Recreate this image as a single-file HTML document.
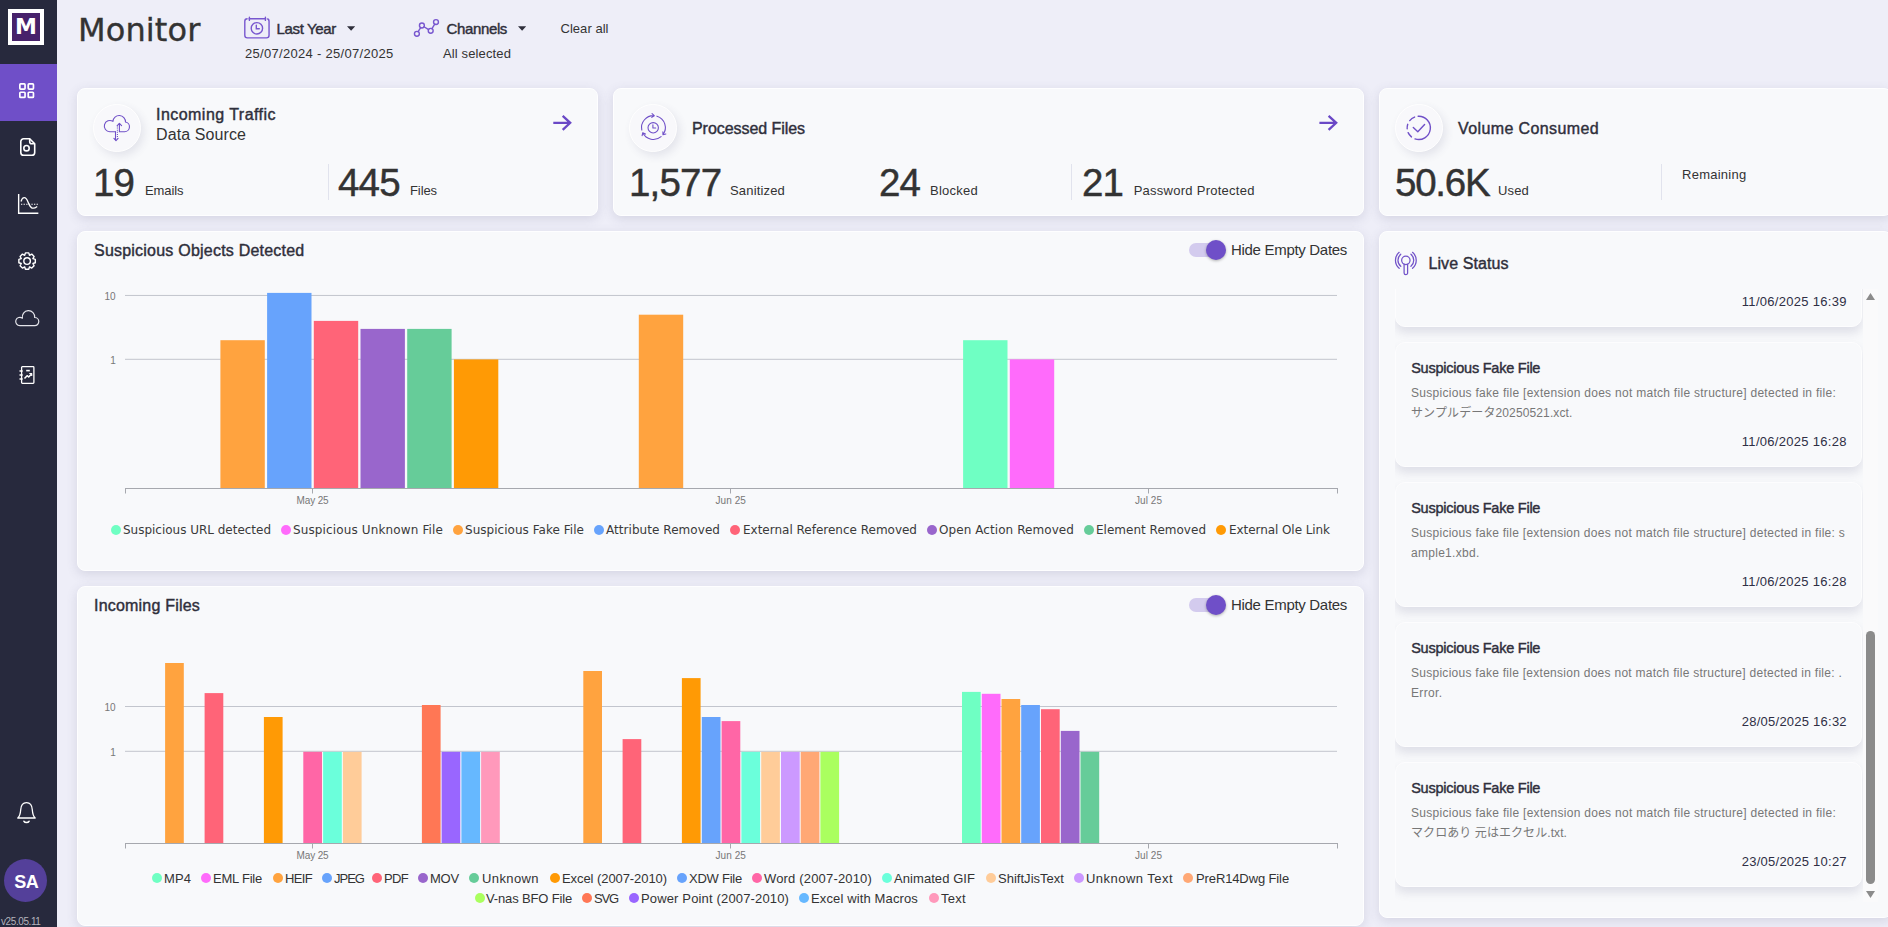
<!DOCTYPE html>
<html lang="en">
<head>
<meta charset="utf-8">
<title>Monitor</title>
<style>
*{box-sizing:border-box;margin:0;padding:0}
html,body{width:1888px;height:927px;overflow:hidden}
body{background:#eeeef8;font-family:"Liberation Sans","Noto Sans CJK JP",sans-serif;position:relative;color:#333}
.t{position:absolute;white-space:nowrap;display:block}
.dj{font-family:"DejaVu Sans","Noto Sans CJK JP",sans-serif}
.abs{position:absolute}
.side{position:absolute;left:0;top:0;width:57px;height:927px;background:#27293d}
.side .act{position:absolute;left:0;top:64px;width:57px;height:57px;background:#6f4fc8}
.logo{position:absolute;left:8px;top:9px;width:36px;height:36px;background:#fff}
.logo i{position:absolute;left:4px;top:4px;width:28px;height:28px;background:#47216b;display:block}
.card{position:absolute;background:#f8f9fb;border-radius:8px;border:1px solid #fefeff;box-shadow:0 3px 11px rgba(80,80,120,.16)}
.ic{position:absolute;width:47.600px;height:47.600px;border-radius:50%;background:#f8f8fb;border:1.500px solid #fff;box-shadow:3px 4px 9px rgba(60,60,110,.11)}
.vd{position:absolute;width:1px;background:#e1e3ed}
.d{position:absolute;display:block;width:10.2px;height:10.2px;border-radius:50%}
.tg{position:absolute;width:34px;height:14px;border-radius:7px;background:#d3cbee}
.kn{position:absolute;width:20.3px;height:20.3px;border-radius:50%;background:#6f4fc8;box-shadow:0 1px 3px rgba(0,0,0,.3)}
.lc{position:absolute;width:467.3px;height:124.5px;background:#f8f9fb;border-radius:10px;border:1px solid #fdfdfe;box-shadow:0 6px 10px rgba(70,70,110,.135)}
svg{position:absolute;overflow:visible}
</style>
</head>
<body>

<!-- sidebar -->
<div class="side">
  <div class="logo"><i></i></div>
  <div class="act"></div>
  <!-- grid icon -->
  <svg style="left:19.4px;top:82.5px" width="15.3" height="15.3" viewBox="0 0 15.3 15.3" fill="none" stroke="#fff" stroke-width="1.7">
    <rect x="0.85" y="0.85" width="5.2" height="5.2" rx="0.8"/><rect x="9.25" y="0.85" width="5.2" height="5.2" rx="0.8"/>
    <rect x="0.85" y="9.25" width="5.2" height="5.2" rx="0.8"/><rect x="9.25" y="9.25" width="5.2" height="5.2" rx="0.8"/>
  </svg>
  <!-- file icon -->
  <svg style="left:19.9px;top:137.8px" width="15.5" height="18" viewBox="0 0 15.5 18" fill="none" stroke="#fff" stroke-width="1.6" stroke-linejoin="round">
    <path d="M3.6 0.8h6.1l5 5v8.600a2.800 2.800 0 0 1-2.800 2.800H3.600a2.800 2.800 0 0 1-2.800-2.800V3.600a2.800 2.800 0 0 1 2.800-2.800z"/><path d="M9.700 0.800v3a2 2 0 0 0 2 2h3"/><circle cx="6.500" cy="10.200" r="2.700"/>
  </svg>
  <!-- chart icon -->
  <svg style="left:17.500px;top:194.400px" width="20.500" height="20" viewBox="0 0 20.500 20" fill="none" stroke="#fff" stroke-width="1.300">
    <path d="M0.650 0v19.300h19.700" stroke-width="1.400"/><path d="M3 7.500c1.500-5 4.800-5.500 7 0.500s4.500 8 9.200 4.500"/><path d="M3 10.200h17" stroke-dasharray="1.300 1.300" stroke-width="1.100"/>
  </svg>
  <!-- gear icon -->
  <svg style="left:17.900px;top:252px" width="18.200" height="18.200" viewBox="-9.100 -9.100 18.200 18.200" fill="none" stroke="#fff" stroke-width="1.400" stroke-linejoin="round">
    <circle cx="0" cy="0" r="3.300"/>
    <path d="M-2.40 -5.83L-1.67 -8.23L1.67 -8.23L2.40 -5.83L2.43 -5.81L4.64 -7.00L7.00 -4.64L5.81 -2.43L5.83 -2.40L8.23 -1.67L8.23 1.67L5.83 2.40L5.81 2.43L7.00 4.64L4.64 7.00L2.43 5.81L2.40 5.83L1.67 8.23L-1.67 8.23L-2.40 5.83L-2.43 5.81L-4.64 7.00L-7.00 4.64L-5.81 2.43L-5.83 2.40L-8.23 1.67L-8.23 -1.67L-5.83 -2.40L-5.81 -2.43L-7.00 -4.64L-4.64 -7.00L-2.43 -5.81z"/>
  </svg>
  <!-- cloud icon -->
  <svg style="left:14.800px;top:309.700px" width="24.400" height="16.400" viewBox="0 0 24.400 16.400" fill="none" stroke="#e4e4ea" stroke-width="1.200" stroke-linejoin="round">
    <path d="M4.9 15.7H19.7A4.1 4.1 0 0 0 19.66 7.5A6.2 6.2 0 1 0 7.45 8.17A4.2 4.2 0 1 0 4.9 15.7z"/>
  </svg>
  <!-- report icon -->
  <svg style="left:19.400px;top:366px" width="15.600" height="18" viewBox="0 0 15.600 18" fill="none" stroke="#fff" stroke-width="1.300" stroke-linejoin="round">
    <rect x="2.600" y="0.650" width="12.300" height="16.700" rx="0.800"/><path d="M0.500 5h3.200M0.500 9h3.200M0.500 13h3.200" stroke-width="1.500"/><path d="M5.500 12.500l2.600-2.800 1.600 1.300 2.800-3" stroke-width="1.500"/><path d="M10.300 7.500h2.400v2.400" stroke-width="1.200"/><path d="M7.200 4.600h3.600" stroke-width="1.600"/>
  </svg>
  <!-- bell -->
  <svg style="left:17px;top:802px" width="19" height="21.500" viewBox="0 0 19 21.500" fill="none" stroke="#fff" stroke-width="1.300" stroke-linejoin="round" stroke-linecap="round">
    <path d="M0.800 16h17.400c-1.900-1.700-2.600-3.500-2.900-8.200C15 3.300 12.500 0.700 9.500 0.700S4 3.300 3.700 7.800C3.400 12.500 2.700 14.300 0.800 16z"/><path d="M7 19.300c.9 1.500 4.100 1.500 5 0" stroke-width="1.600"/>
  </svg>
  <div class="abs" style="left:3.900px;top:858.800px;width:43.400px;height:43.400px;border-radius:50%;background:#54409a"></div>
</div>

<!-- header icons -->
<svg style="left:240px;top:10px" width="300" height="34" viewBox="240 10 300 34" fill="none" stroke="#7857cf" stroke-width="1.400" stroke-linecap="round">
  <rect x="244.800" y="18.700" width="24.250" height="19.200" rx="2.600"/>
  <path d="M247.600 18.700h1M266.200 18.700h1" stroke="#eeeef8" stroke-width="2.400" stroke-linecap="butt"/>
  <path d="M249.400 17.200V20.400M265.400 17.200V20.400"/>
  <circle cx="256.900" cy="28.300" r="5.700"/>
  <path d="M256.300 25.200V28.700H259.300"/>
  <circle cx="416.9" cy="33.8" r="2.45"/><circle cx="421.9" cy="25.5" r="2.45"/><circle cx="430.7" cy="30.8" r="2.45"/><circle cx="436" cy="22.1" r="2.45"/>
  <path d="M418.16 31.70L420.64 27.60M424.00 26.76L428.60 29.54M431.97 28.71L434.73 24.19"/>
  <path d="M347 26.300h8.200l-4.100 4.500zM518 26.300h8.200l-4.100 4.500z" fill="#2f2f3b" stroke="none"/>
</svg>

<!-- stat cards -->
<div class="card" style="left:77px;top:88px;width:521px;height:128px"></div>
<div class="card" style="left:613px;top:88px;width:751px;height:128px"></div>
<div class="card" style="left:1379px;top:88px;width:513px;height:128px"></div>
<div class="ic" style="left:93.300px;top:104px"></div>
<div class="ic" style="left:629.300px;top:104px"></div>
<div class="ic" style="left:1395.300px;top:104px"></div>
<div class="vd" style="left:328px;top:164px;height:36px"></div>
<div class="vd" style="left:1071px;top:164px;height:36px"></div>
<div class="vd" style="left:1661px;top:164px;height:36px"></div>


<!-- arrows -->
<svg style="left:540px;top:110px" width="810" height="26" viewBox="540 110 810 26" fill="none" stroke="#6a48c6" stroke-width="2.300" stroke-linejoin="miter">
  <path d="M1319.400 122.800H1336M1328.600 115.900L1336.200 122.800L1328.600 129.900"/>
  <path d="M553.300 122.800H570M562.700 115.900L570.200 122.800L562.700 129.900"/>
</svg>



<!-- stat icons -->
<svg style="left:0;top:100px" width="1888" height="60" viewBox="0 100 1888 60" fill="none" stroke="#7050c8" stroke-width="1.1" stroke-linecap="round" stroke-linejoin="round">
  <path d="M115.500 131.700H109.900A5.600 5.600 0 1 1 112.910 121.380A6.300 6.300 0 0 1 125.490 122.080A4.850 4.850 0 0 1 124.600 131.700H119.400V123.500"/>
  <path d="M117.2 125.600L119.400 123.300L121.600 125.600"/>
  <path d="M115.500 131.700V140.200M113.900 138.300L116 140.600L118.100 138.300"/>
  <path d="M117.400 125.500V138.500" stroke-dasharray="1 1.100" stroke-linecap="butt"/>
  <path d="M641.81 130.02A11.9 11.9 0 0 1 654.28 115.68 M652.05 113.67L654.28 115.68L651.79 117.36 M656.93 116.17A11.9 11.9 0 0 1 662.95 134.71 M665.85 133.94L662.95 134.71L662.90 131.71 M661.10 136.67A11.9 11.9 0 0 1 642.75 132.77 M642.13 135.70L642.75 132.77L645.45 134.08"/>
  <circle cx="653.2" cy="127.800" r="5.200"/>
  <path d="M652.900 124.700V128H655.700"/>
  <g stroke-width="1.400">
  <path d="M1418.14 116.32A11.6 11.6 0 1 1 1414.97 138.87"/>
  <path d="M1411.45 136.91A11.6 11.6 0 0 1 1408.15 132.62 M1407.18 128.71A11.6 11.6 0 0 1 1407.72 124.32 M1409.74 120.60A11.6 11.6 0 0 1 1414.59 117.07"/>
  <path d="M1413.300 127.400L1417.800 131.700L1424.600 124.400"/>
  </g>
</svg>

<!-- chart cards -->
<div class="card" style="left:77px;top:231px;width:1287px;height:340px"></div>
<div class="card" style="left:77px;top:586px;width:1287px;height:340px"></div>
<div class="card" style="left:1379px;top:231px;width:513px;height:687px"></div>

<!-- toggles -->
<div class="tg" style="left:1189px;top:243px"></div><div class="kn" style="left:1206px;top:239.8px"></div>
<div class="tg" style="left:1189px;top:598px"></div><div class="kn" style="left:1206px;top:594.8px"></div>

<!-- charts -->
<svg style="left:0;top:0" width="1370" height="927" viewBox="0 0 1370 927" shape-rendering="auto">
<path d="M125 295.45H1337" stroke="#c2c5cd" stroke-width="1"/>
<path d="M125 359.3H1337" stroke="#c2c5cd" stroke-width="1"/>
<path d="M125 706.5H1337" stroke="#c2c5cd" stroke-width="1"/>
<path d="M125 751.3H1337" stroke="#c2c5cd" stroke-width="1"/>
<rect x="220.4" y="340.2" width="44.4" height="148.3" fill="#ffa33f"/>
<rect x="267.1" y="292.9" width="44.4" height="195.6" fill="#67a3fc"/>
<rect x="313.8" y="320.9" width="44.4" height="167.6" fill="#ff6478"/>
<rect x="360.5" y="328.9" width="44.4" height="159.6" fill="#9966cc"/>
<rect x="407.2" y="328.9" width="44.4" height="159.6" fill="#66cc99"/>
<rect x="453.9" y="359.4" width="44.4" height="129.1" fill="#ff9a05"/>
<rect x="638.8" y="314.7" width="44.4" height="173.8" fill="#ffa33f"/>
<rect x="963.1" y="340.2" width="44.4" height="148.3" fill="#6fffc3"/>
<rect x="1009.8" y="359.4" width="44.4" height="129.1" fill="#ff6bfb"/>
<rect x="165.1" y="663.0" width="18.7" height="180.5" fill="#ffa33f"/>
<rect x="204.6" y="693.1" width="18.7" height="150.4" fill="#ff6478"/>
<rect x="263.9" y="717.0" width="18.7" height="126.5" fill="#ff9a05"/>
<rect x="303.3" y="751.8" width="18.7" height="91.7" fill="#ff66a6"/>
<rect x="323.1" y="751.8" width="18.7" height="91.7" fill="#6bffdb"/>
<rect x="342.9" y="751.8" width="18.7" height="91.7" fill="#ffcc99"/>
<rect x="421.9" y="705.0" width="18.7" height="138.5" fill="#ff7755"/>
<rect x="441.6" y="751.8" width="18.7" height="91.7" fill="#9966ff"/>
<rect x="461.4" y="751.8" width="18.7" height="91.7" fill="#66b8ff"/>
<rect x="481.1" y="751.8" width="18.7" height="91.7" fill="#ff99bb"/>
<rect x="583.3" y="671.0" width="18.7" height="172.5" fill="#ffa33f"/>
<rect x="622.6" y="739.1" width="18.7" height="104.4" fill="#ff6478"/>
<rect x="681.9" y="678.1" width="18.7" height="165.4" fill="#ff9a05"/>
<rect x="701.8" y="717.0" width="18.7" height="126.5" fill="#67a3fc"/>
<rect x="721.6" y="721.1" width="18.7" height="122.4" fill="#ff66a6"/>
<rect x="741.4" y="751.8" width="18.7" height="91.7" fill="#6bffdb"/>
<rect x="761.2" y="751.8" width="18.7" height="91.7" fill="#ffcc99"/>
<rect x="781.0" y="751.8" width="18.7" height="91.7" fill="#cc99ff"/>
<rect x="800.7" y="751.8" width="18.7" height="91.7" fill="#ffa875"/>
<rect x="820.4" y="751.8" width="18.7" height="91.7" fill="#aaff5f"/>
<rect x="962.0" y="691.9" width="18.7" height="151.6" fill="#6fffc3"/>
<rect x="981.8" y="693.8" width="18.7" height="149.7" fill="#ff6bfb"/>
<rect x="1001.5" y="699.0" width="18.7" height="144.5" fill="#ffa33f"/>
<rect x="1021.2" y="705.0" width="18.7" height="138.5" fill="#67a3fc"/>
<rect x="1041.0" y="709.2" width="18.7" height="134.3" fill="#ff6478"/>
<rect x="1060.8" y="730.9" width="18.7" height="112.6" fill="#9966cc"/>
<rect x="1080.5" y="751.8" width="18.7" height="91.7" fill="#66cc99"/>
<path d="M125 488.5H1338" stroke="#a6a8ae" stroke-width="1"/>
<path d="M125.5 488.5v5" stroke="#a6a8ae" stroke-width="1"/>
<path d="M312.5 488.5v5" stroke="#a6a8ae" stroke-width="1"/>
<path d="M730.5 488.5v5" stroke="#a6a8ae" stroke-width="1"/>
<path d="M1148.5 488.5v5" stroke="#a6a8ae" stroke-width="1"/>
<path d="M1337.5 488.5v5" stroke="#a6a8ae" stroke-width="1"/>
<path d="M125 843.5H1338" stroke="#a6a8ae" stroke-width="1"/>
<path d="M125.5 843.5v5" stroke="#a6a8ae" stroke-width="1"/>
<path d="M312.5 843.5v5" stroke="#a6a8ae" stroke-width="1"/>
<path d="M730.5 843.5v5" stroke="#a6a8ae" stroke-width="1"/>
<path d="M1148.5 843.5v5" stroke="#a6a8ae" stroke-width="1"/>
<path d="M1337.5 843.5v5" stroke="#a6a8ae" stroke-width="1"/>
</svg>
<i class="d" style="left:110.7px;top:524.5px;background:#6fffc3"></i>
<i class="d" style="left:280.7px;top:524.5px;background:#ff6bfb"></i>
<i class="d" style="left:452.7px;top:524.5px;background:#ffa33f"></i>
<i class="d" style="left:593.7px;top:524.5px;background:#67a3fc"></i>
<i class="d" style="left:729.7px;top:524.5px;background:#ff6478"></i>
<i class="d" style="left:926.7px;top:524.5px;background:#9966cc"></i>
<i class="d" style="left:1083.7px;top:524.5px;background:#66cc99"></i>
<i class="d" style="left:1215.7px;top:524.5px;background:#ff9a05"></i>
<i class="d" style="left:151.7px;top:872.9px;background:#6fffc3"></i>
<i class="d" style="left:200.7px;top:872.9px;background:#ff6bfb"></i>
<i class="d" style="left:272.7px;top:872.9px;background:#ffa33f"></i>
<i class="d" style="left:321.7px;top:872.9px;background:#67a3fc"></i>
<i class="d" style="left:371.7px;top:872.9px;background:#ff6478"></i>
<i class="d" style="left:417.7px;top:872.9px;background:#9966cc"></i>
<i class="d" style="left:468.7px;top:872.9px;background:#66cc99"></i>
<i class="d" style="left:549.7px;top:872.9px;background:#ff9a05"></i>
<i class="d" style="left:676.7px;top:872.9px;background:#67a3fc"></i>
<i class="d" style="left:751.7px;top:872.9px;background:#ff66a6"></i>
<i class="d" style="left:881.7px;top:872.9px;background:#6bffdb"></i>
<i class="d" style="left:985.7px;top:872.9px;background:#ffcc99"></i>
<i class="d" style="left:1073.7px;top:872.9px;background:#cc99ff"></i>
<i class="d" style="left:1182.7px;top:872.9px;background:#ffa875"></i>
<i class="d" style="left:474.7px;top:892.9px;background:#aaff5f"></i>
<i class="d" style="left:581.7px;top:892.9px;background:#ff7755"></i>
<i class="d" style="left:628.7px;top:892.9px;background:#9966ff"></i>
<i class="d" style="left:798.7px;top:892.9px;background:#66b8ff"></i>
<i class="d" style="left:928.7px;top:892.9px;background:#ff99bb"></i>

<!-- live status -->
<svg style="left:1394.9px;top:251.3px" width="22" height="24" viewBox="0 0 22 24" fill="none" stroke="#7253c9" stroke-width="1.25" stroke-linecap="round">
  <circle cx="10.85" cy="9.3" r="4.2"/>
  <path d="M9.1 13.3v8.6a1.75 1.75 0 0 0 3.5 0v-8.6"/>
  <path d="M5.77 3.25a7.9 7.9 0 0 0 0 12.10M15.93 3.25a7.9 7.9 0 0 1 0 12.10"/>
  <path d="M4.17 1.33a10.4 10.4 0 0 0 0 15.93M17.53 1.33a10.4 10.4 0 0 1 0 15.93"/>
</svg>
<div class="abs" style="left:1395px;top:289px;width:484px;height:613px;overflow:hidden">
  <div class="lc" style="left:0;top:-87px"></div>
  <div class="lc" style="left:0;top:53px"></div>
  <div class="lc" style="left:0;top:193px"></div>
  <div class="lc" style="left:0;top:333px"></div>
  <div class="lc" style="left:0;top:473px"></div>
  <div class="abs" style="left:468px;top:0;width:15px;height:613px;background:#fafafb"></div>
  <div class="abs" style="left:471px;top:342px;width:9px;height:253px;border-radius:4.5px;background:#8b8b8b"></div>
  <svg style="left:471px;top:4px" width="9" height="7" viewBox="0 0 9 7"><path d="M0 7h9L4.500 0z" fill="#8b8b8b"/></svg>
  <svg style="left:471px;top:602px" width="9" height="7" viewBox="0 0 9 7"><path d="M0 0h9L4.500 7z" fill="#8b8b8b"/></svg>
</div>

<span class="t dj" style="left:78px;top:13.91px;font-size:32px;line-height:32px;color:#333;letter-spacing:0.123px;-webkit-text-stroke:0.35px;">Monitor</span>
<span class="t" style="left:276.5px;top:21.30px;font-size:15px;line-height:15px;color:#2f2f3b;-webkit-text-stroke:0.42px;letter-spacing:-0.340px;">Last Year</span>
<span class="t" style="left:245px;top:47.00px;font-size:13px;line-height:13px;color:#333;letter-spacing:0.296px;">25/07/2024 - 25/07/2025</span>
<span class="t" style="left:446.5px;top:21.30px;font-size:15px;line-height:15px;color:#2f2f3b;-webkit-text-stroke:0.42px;letter-spacing:-0.361px;">Channels</span>
<span class="t" style="left:443px;top:47.00px;font-size:13px;line-height:13px;color:#333;letter-spacing:0.126px;">All selected</span>
<span class="t" style="left:560.5px;top:21.50px;font-size:13px;line-height:13px;color:#333;letter-spacing:0.035px;">Clear all</span>
<span class="t" style="left:156px;top:106.96px;font-size:16px;line-height:16px;color:#2f2f3b;-webkit-text-stroke:0.42px;letter-spacing:0.460px;">Incoming Traffic</span>
<span class="t" style="left:156px;top:126.96px;font-size:16px;line-height:16px;color:#333;letter-spacing:0.097px;">Data Source</span>
<span class="t" style="left:93px;top:163.91px;font-size:38.5px;line-height:38.5px;color:#333333;letter-spacing:-0.8px;-webkit-text-stroke:0.45px;">19</span>
<span class="t" style="left:145px;top:184.00px;font-size:13px;line-height:13px;color:#333;letter-spacing:-0.086px;">Emails</span>
<span class="t" style="left:338px;top:163.91px;font-size:38.5px;line-height:38.5px;color:#333333;letter-spacing:-0.8px;-webkit-text-stroke:0.45px;">445</span>
<span class="t" style="left:410px;top:184.00px;font-size:13px;line-height:13px;color:#333;letter-spacing:-0.091px;">Files</span>
<span class="t" style="left:692px;top:121.46px;font-size:16px;line-height:16px;color:#2f2f3b;-webkit-text-stroke:0.42px;letter-spacing:-0.055px;">Processed Files</span>
<span class="t" style="left:629px;top:163.91px;font-size:38.5px;line-height:38.5px;color:#333333;letter-spacing:-0.8px;-webkit-text-stroke:0.45px;">1,577</span>
<span class="t" style="left:730px;top:184.00px;font-size:13px;line-height:13px;color:#333;letter-spacing:0.168px;">Sanitized</span>
<span class="t" style="left:879px;top:163.91px;font-size:38.5px;line-height:38.5px;color:#333333;letter-spacing:-0.8px;-webkit-text-stroke:0.45px;">24</span>
<span class="t" style="left:930px;top:184.00px;font-size:13px;line-height:13px;color:#333;letter-spacing:0.250px;">Blocked</span>
<span class="t" style="left:1082px;top:163.91px;font-size:38.5px;line-height:38.5px;color:#333333;letter-spacing:-0.8px;-webkit-text-stroke:0.45px;">21</span>
<span class="t" style="left:1133.7px;top:184.00px;font-size:13px;line-height:13px;color:#333;letter-spacing:0.259px;">Password Protected</span>
<span class="t" style="left:1458px;top:121.46px;font-size:16px;line-height:16px;color:#2f2f3b;-webkit-text-stroke:0.42px;letter-spacing:0.388px;">Volume Consumed</span>
<span class="t" style="left:1395px;top:163.91px;font-size:38.5px;line-height:38.5px;color:#333333;letter-spacing:-1.25px;-webkit-text-stroke:0.45px;">50.6K</span>
<span class="t" style="left:1498px;top:184.00px;font-size:13px;line-height:13px;color:#333;letter-spacing:0.160px;">Used</span>
<span class="t" style="left:1682px;top:168.00px;font-size:13px;line-height:13px;color:#333;letter-spacing:0.260px;">Remaining</span>
<span class="t" style="left:94px;top:243.46px;font-size:16px;line-height:16px;color:#2f2f3b;-webkit-text-stroke:0.42px;letter-spacing:0.220px;">Suspicious Objects Detected</span>
<span class="t" style="left:1231px;top:242.30px;font-size:15px;line-height:15px;color:#333;letter-spacing:-0.306px;">Hide Empty Dates</span>
<span class="t" style="left:104.5px;top:291.74px;font-size:10px;line-height:10px;color:#777;letter-spacing:-0.062px;">10</span>
<span class="t" style="left:110.2px;top:355.54px;font-size:10px;line-height:10px;color:#777;letter-spacing:-0.562px;">1</span>
<span class="t" style="left:94px;top:598.46px;font-size:16px;line-height:16px;color:#2f2f3b;-webkit-text-stroke:0.42px;letter-spacing:0.203px;">Incoming Files</span>
<span class="t" style="left:1231px;top:597.30px;font-size:15px;line-height:15px;color:#333;letter-spacing:-0.306px;">Hide Empty Dates</span>
<span class="t" style="left:104.5px;top:702.74px;font-size:10px;line-height:10px;color:#777;letter-spacing:-0.062px;">10</span>
<span class="t" style="left:110.2px;top:747.63px;font-size:10px;line-height:10px;color:#777;letter-spacing:-0.562px;">1</span>
<span class="t" style="left:296.5px;top:495.54px;font-size:10px;line-height:10px;color:#777;letter-spacing:-0.133px;">May 25</span>
<span class="t" style="left:715.5px;top:495.54px;font-size:10px;line-height:10px;color:#777;letter-spacing:0.078px;">Jun 25</span>
<span class="t" style="left:1135px;top:495.54px;font-size:10px;line-height:10px;color:#777;letter-spacing:0.052px;">Jul 25</span>
<span class="t" style="left:296.5px;top:850.53px;font-size:10px;line-height:10px;color:#777;letter-spacing:-0.133px;">May 25</span>
<span class="t" style="left:715.5px;top:850.53px;font-size:10px;line-height:10px;color:#777;letter-spacing:0.078px;">Jun 25</span>
<span class="t" style="left:1135px;top:850.53px;font-size:10px;line-height:10px;color:#777;letter-spacing:0.052px;">Jul 25</span>
<span class="t dj" style="left:123px;top:524.34px;font-size:12px;line-height:12px;color:#3a3a3a;letter-spacing:-0.017px;">Suspicious URL detected</span>
<span class="t dj" style="left:293px;top:524.34px;font-size:12px;line-height:12px;color:#3a3a3a;letter-spacing:0.131px;">Suspicious Unknown File</span>
<span class="t dj" style="left:465px;top:524.34px;font-size:12px;line-height:12px;color:#3a3a3a;letter-spacing:0.034px;">Suspicious Fake File</span>
<span class="t dj" style="left:606px;top:524.34px;font-size:12px;line-height:12px;color:#3a3a3a;letter-spacing:0.051px;">Attribute Removed</span>
<span class="t dj" style="left:743px;top:524.34px;font-size:12px;line-height:12px;color:#3a3a3a;letter-spacing:-0.007px;">External Reference Removed</span>
<span class="t dj" style="left:939px;top:524.34px;font-size:12px;line-height:12px;color:#3a3a3a;letter-spacing:0.075px;">Open Action Removed</span>
<span class="t dj" style="left:1096px;top:524.34px;font-size:12px;line-height:12px;color:#3a3a3a;letter-spacing:0.013px;">Element Removed</span>
<span class="t dj" style="left:1229px;top:524.34px;font-size:12px;line-height:12px;color:#3a3a3a;letter-spacing:-0.068px;">External Ole Link</span>
<span class="t" style="left:164px;top:872.00px;font-size:13px;line-height:13px;color:#333;letter-spacing:0.089px;">MP4</span>
<span class="t" style="left:213px;top:872.00px;font-size:13px;line-height:13px;color:#333;letter-spacing:-0.227px;">EML File</span>
<span class="t" style="left:285px;top:872.00px;font-size:13px;line-height:13px;color:#333;letter-spacing:-0.656px;">HEIF</span>
<span class="t" style="left:334px;top:872.00px;font-size:13px;line-height:13px;color:#333;letter-spacing:-0.992px;">JPEG</span>
<span class="t" style="left:384px;top:872.00px;font-size:13px;line-height:13px;color:#333;letter-spacing:-0.667px;">PDF</span>
<span class="t" style="left:430px;top:872.00px;font-size:13px;line-height:13px;color:#333;letter-spacing:-0.208px;">MOV</span>
<span class="t" style="left:482px;top:872.00px;font-size:13px;line-height:13px;color:#333;letter-spacing:0.400px;">Unknown</span>
<span class="t" style="left:562px;top:872.00px;font-size:13px;line-height:13px;color:#333;letter-spacing:-0.073px;">Excel (2007-2010)</span>
<span class="t" style="left:689px;top:872.00px;font-size:13px;line-height:13px;color:#333;letter-spacing:-0.236px;">XDW File</span>
<span class="t" style="left:764px;top:872.00px;font-size:13px;line-height:13px;color:#333;letter-spacing:0.171px;">Word (2007-2010)</span>
<span class="t" style="left:894px;top:872.00px;font-size:13px;line-height:13px;color:#333;letter-spacing:0.066px;">Animated GIF</span>
<span class="t" style="left:998px;top:872.00px;font-size:13px;line-height:13px;color:#333;letter-spacing:0.021px;">ShiftJisText</span>
<span class="t" style="left:1086px;top:872.00px;font-size:13px;line-height:13px;color:#333;letter-spacing:0.465px;">Unknown Text</span>
<span class="t" style="left:1196px;top:872.00px;font-size:13px;line-height:13px;color:#333;letter-spacing:-0.118px;">PreR14Dwg File</span>
<span class="t" style="left:486px;top:892.00px;font-size:13px;line-height:13px;color:#333;letter-spacing:-0.153px;">V-nas BFO File</span>
<span class="t" style="left:594px;top:892.00px;font-size:13px;line-height:13px;color:#333;letter-spacing:-1.156px;">SVG</span>
<span class="t" style="left:641px;top:892.00px;font-size:13px;line-height:13px;color:#333;letter-spacing:0.151px;">Power Point (2007-2010)</span>
<span class="t" style="left:811px;top:892.00px;font-size:13px;line-height:13px;color:#333;letter-spacing:0.132px;">Excel with Macros</span>
<span class="t" style="left:941px;top:892.00px;font-size:13px;line-height:13px;color:#333;letter-spacing:0.289px;">Text</span>
<span class="t" style="left:1428.5px;top:255.96px;font-size:16px;line-height:16px;color:#2f2f3b;-webkit-text-stroke:0.42px;letter-spacing:0.077px;">Live Status</span>
<span class="t" style="right:41.2px;top:294.50px;font-size:13px;line-height:13px;color:#2f2f45;letter-spacing:0.297px;">11/06/2025 16:39</span>
<span class="t" style="left:1411.2px;top:360.73px;font-size:14.5px;line-height:14.5px;color:#2f2f3b;-webkit-text-stroke:0.42px;letter-spacing:-0.239px;">Suspicious Fake File</span>
<span class="t" style="left:1411px;top:386.84px;font-size:12px;line-height:12px;color:#777;letter-spacing:0.285px;">Suspicious fake file [extension does not match file structure] detected in file:</span>
<span class="t" style="left:1411px;top:406.84px;font-size:12px;line-height:12px;color:#777;letter-spacing:0.123px;">サンプルデータ20250521.xct.</span>
<span class="t" style="right:41.2px;top:434.50px;font-size:13px;line-height:13px;color:#2f2f45;letter-spacing:0.297px;">11/06/2025 16:28</span>
<span class="t" style="left:1411.2px;top:500.73px;font-size:14.5px;line-height:14.5px;color:#2f2f3b;-webkit-text-stroke:0.42px;letter-spacing:-0.239px;">Suspicious Fake File</span>
<span class="t" style="left:1411px;top:526.84px;font-size:12px;line-height:12px;color:#777;letter-spacing:0.274px;">Suspicious fake file [extension does not match file structure] detected in file: s</span>
<span class="t" style="left:1411px;top:546.84px;font-size:12px;line-height:12px;color:#777;letter-spacing:0.284px;">ample1.xbd.</span>
<span class="t" style="right:41.2px;top:574.50px;font-size:13px;line-height:13px;color:#2f2f45;letter-spacing:0.297px;">11/06/2025 16:28</span>
<span class="t" style="left:1411.2px;top:640.73px;font-size:14.5px;line-height:14.5px;color:#2f2f3b;-webkit-text-stroke:0.42px;letter-spacing:-0.239px;">Suspicious Fake File</span>
<span class="t" style="left:1411px;top:666.84px;font-size:12px;line-height:12px;color:#777;letter-spacing:0.270px;">Suspicious fake file [extension does not match file structure] detected in file: .</span>
<span class="t" style="left:1411px;top:686.84px;font-size:12px;line-height:12px;color:#777;letter-spacing:0.359px;">Error.</span>
<span class="t" style="right:41.2px;top:714.50px;font-size:13px;line-height:13px;color:#2f2f45;letter-spacing:0.236px;">28/05/2025 16:32</span>
<span class="t" style="left:1411.2px;top:780.73px;font-size:14.5px;line-height:14.5px;color:#2f2f3b;-webkit-text-stroke:0.42px;letter-spacing:-0.239px;">Suspicious Fake File</span>
<span class="t" style="left:1411px;top:806.84px;font-size:12px;line-height:12px;color:#777;letter-spacing:0.285px;">Suspicious fake file [extension does not match file structure] detected in file:</span>
<span class="t" style="left:1411px;top:826.84px;font-size:12px;line-height:12px;color:#777;letter-spacing:0.078px;">マクロあり 元はエクセル.txt.</span>
<span class="t" style="right:41.2px;top:854.50px;font-size:13px;line-height:13px;color:#2f2f45;letter-spacing:0.236px;">23/05/2025 10:27</span>
<span class="t" style="left:1px;top:916.53px;font-size:10px;line-height:10px;color:#b4b4bc;letter-spacing:-0.410px;">v25.05.11</span>
<span class="t" style="left:14.2px;top:873.06px;font-size:18px;line-height:18px;color:#fff;font-weight:700;letter-spacing:-0.508px;">SA</span>
<span class="t dj" style="left:14.9px;top:16.18px;font-size:22px;line-height:22px;color:#fff;font-weight:700;">M</span>
</body>
</html>
